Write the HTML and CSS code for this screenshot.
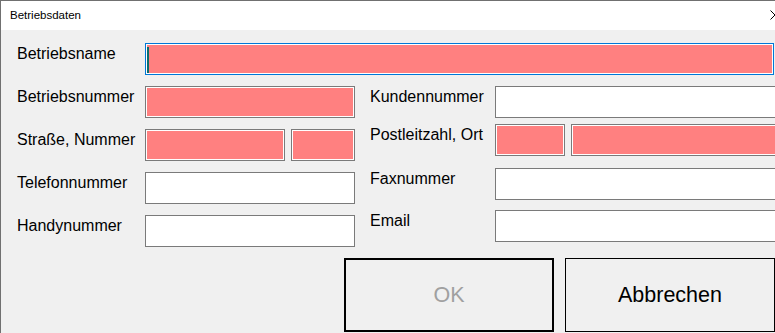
FILE: index.html
```html
<!DOCTYPE html>
<html lang="de">
<head>
<meta charset="utf-8">
<title>Betriebsdaten</title>
<link rel="stylesheet" href="styles.css">
</head>
<body>
<div class="window">
  <div class="titlebar">
    <span class="title">Betriebsdaten</span>
    <svg class="close" width="10" height="10" viewBox="0 0 10 10"><path d="M0.5 0.5 L9.5 9.5 M0.5 9.5 L9.5 0.5" stroke="#000" stroke-width="1" fill="none"/></svg>
  </div>
  <div class="content">
    <div class="row">
      <span class="lbl">Betriebsname</span>
      <div class="field req focus wide"><span class="caret"></span></div>
    </div>
    <div class="columns">
      <div class="col col-left">
        <div class="row">
          <span class="lbl">Betriebsnummer</span>
          <div class="field req"></div>
        </div>
        <div class="row">
          <span class="lbl">Straße, Nummer</span>
          <div class="pair">
            <div class="field req street"></div>
            <div class="field req house"></div>
          </div>
        </div>
        <div class="row">
          <span class="lbl">Telefonnummer</span>
          <div class="field"></div>
        </div>
        <div class="row">
          <span class="lbl">Handynummer</span>
          <div class="field"></div>
        </div>
      </div>
      <div class="col col-right">
        <div class="row">
          <span class="lbl lbl-r">Kundennummer</span>
          <div class="field field-r"></div>
        </div>
        <div class="row r-plz">
          <span class="lbl lbl-r">Postleitzahl, Ort</span>
          <div class="pair">
            <div class="field req plz"></div>
            <div class="field req ort"></div>
          </div>
        </div>
        <div class="row r-fax">
          <span class="lbl lbl-r">Faxnummer</span>
          <div class="field field-r"></div>
        </div>
        <div class="row r-mail">
          <span class="lbl lbl-r">Email</span>
          <div class="field field-r"></div>
        </div>
      </div>
    </div>
    <div class="buttons">
      <button class="btn btn-default">OK</button>
      <button class="btn">Abbrechen</button>
    </div>
  </div>
</div>
</body>
</html>
```

FILE: styles.css
```css
html, body {
  margin: 0;
  padding: 0;
}
body {
  width: 775px;
  height: 333px;
  overflow: hidden;
  background: #f0f0f0;
  font-family: "Liberation Sans", Arial, sans-serif;
  color: #000;
}
.window {
  width: 800px;
  height: 340px;
  border-top: 1px solid #707070;
  border-left: 1px solid #707070;
  background: #f0f0f0;
}
.titlebar {
  position: relative;
  height: 29px;
  box-sizing: border-box;
  padding: 7px 0 0 9px;
  background: #fff;
  font-size: 11.5px;
  line-height: 14px;
}
.close {
  position: absolute;
  left: 769px;
  top: 9px;
}
.content {
  padding: 13px 0 0 16px;
}
.row {
  display: flex;
  height: 32px;
}
.lbl {
  width: 128px;
  padding-top: 1.5px;
  font-size: 16px;
  line-height: 18px;
  white-space: nowrap;
}
.lbl-r {
  width: 125px;
  padding-top: 2px;
}
.field {
  width: 210px;
  height: 32px;
  box-sizing: border-box;
  border: 1px solid #7a7a7a;
  background: #fff;
}
.field.req {
  background: #ff8080;
  box-shadow: inset 0 0 0 1px #fff;
}
.field.focus {
  position: relative;
  border-color: #0078d7;
}
.field.wide {
  width: 629px;
}
.caret {
  position: absolute;
  left: 1px;
  top: 3px;
  width: 2px;
  height: 26px;
  background: #0a6e6e;
}
.columns {
  display: flex;
  align-items: flex-start;
  gap: 15px;
  margin-top: 11px;
}
.col {
  display: flex;
  flex-direction: column;
}
.col-left {
  gap: 11px;
}
.pair {
  display: flex;
  gap: 6px;
}
.field.street {
  width: 140px;
}
.field.house {
  width: 64px;
}
.field-r {
  width: 290px;
}
.field.plz {
  width: 70px;
}
.field.ort {
  width: 214px;
}
.r-plz {
  margin-top: 6px;
}
.r-fax {
  margin-top: 12px;
}
.r-mail {
  margin-top: 10px;
}
.buttons {
  display: flex;
  gap: 11px;
  margin: 11px 0 0 327px;
}
.btn {
  width: 210px;
  height: 74px;
  box-sizing: border-box;
  padding: 0;
  border: 1px solid #000;
  background: #f0f0f0;
  font-family: "Liberation Sans", Arial, sans-serif;
  font-size: 21.5px;
  color: #000;
}
.btn-default {
  border-width: 2px;
  color: #a0a0a0;
}
```
